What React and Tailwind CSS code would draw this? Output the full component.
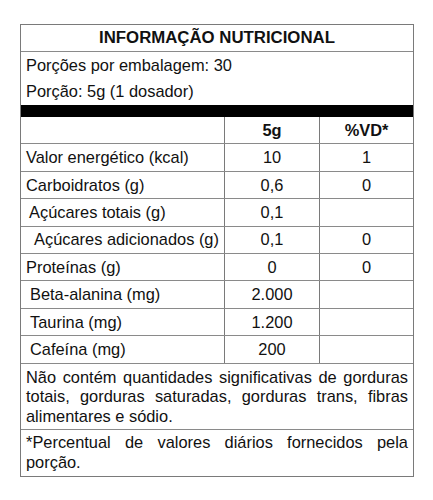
import React from 'react';

const rows = [
  { label: 'Valor energético (kcal)', indent: 'pl-[5px]', qty: '10', vd: '1' },
  { label: 'Carboidratos (g)', indent: 'pl-[5px]', qty: '0,6', vd: '0' },
  { label: 'Açúcares totais (g)', indent: 'pl-[8px]', qty: '0,1', vd: '' },
  { label: 'Açúcares adicionados (g)', indent: 'pl-[13px]', qty: '0,1', vd: '0' },
  { label: 'Proteínas (g)', indent: 'pl-[5px]', qty: '0', vd: '0' },
  { label: 'Beta-alanina (mg)', indent: 'pl-[9px]', qty: '2.000', vd: '' },
  { label: 'Taurina (mg)', indent: 'pl-[9px]', qty: '1.200', vd: '' },
  { label: 'Cafeína (mg)', indent: 'pl-[9px]', qty: '200', vd: '' },
];

export default function App() {
  return (
    <div className="w-[433px] h-[500px] bg-white pt-[24px] pl-[20px] text-[16.4px] text-[#111] font-['Liberation_Sans',Arial,sans-serif]">
      <div className="w-[394px] border border-[#7a7a7a]">
        <div className="h-[27px] border-b border-[#8a8a8a] flex items-center justify-center font-bold text-[16.8px]">
          INFORMAÇÃO NUTRICIONAL
        </div>
        <div className="h-[26.5px] flex items-center pl-[5px]">Porções por embalagem: 30</div>
        <div className="h-[26.5px] flex items-center pl-[5px]">Porção: 5g (1 dosador)</div>
        <div className="h-[12px] bg-black" />

        <div className="grid grid-cols-[203px_95px_1fr] h-[27.4px] border-b border-[#8a8a8a] font-bold">
          <div />
          <div className="border-l border-[#7a7a7a] flex items-center justify-center">5g</div>
          <div className="border-l border-[#7a7a7a] flex items-center justify-center">%VD*</div>
        </div>
        {rows.map((r) => (
          <div key={r.label} className="grid grid-cols-[203px_95px_1fr] h-[27.4px] border-b border-[#8a8a8a]">
            <div className={`flex items-center whitespace-nowrap ${r.indent}`}>{r.label}</div>
            <div className="border-l border-[#7a7a7a] flex items-center justify-center">{r.qty}</div>
            <div className="border-l border-[#7a7a7a] flex items-center justify-center">{r.vd}</div>
          </div>
        ))}

        <p className="px-[5px] pt-[4px] pb-[3px] leading-[19.5px] text-justify border-b border-[#8a8a8a]">
          Não contém quantidades significativas de gorduras totais, gorduras saturadas, gorduras trans, fibras alimentares e sódio.
        </p>
        <p className="px-[5px] pt-[2px] pb-[4px] leading-[20px] text-justify">
          *Percentual de valores diários fornecidos pela porção.
        </p>
      </div>
    </div>
  );
}
